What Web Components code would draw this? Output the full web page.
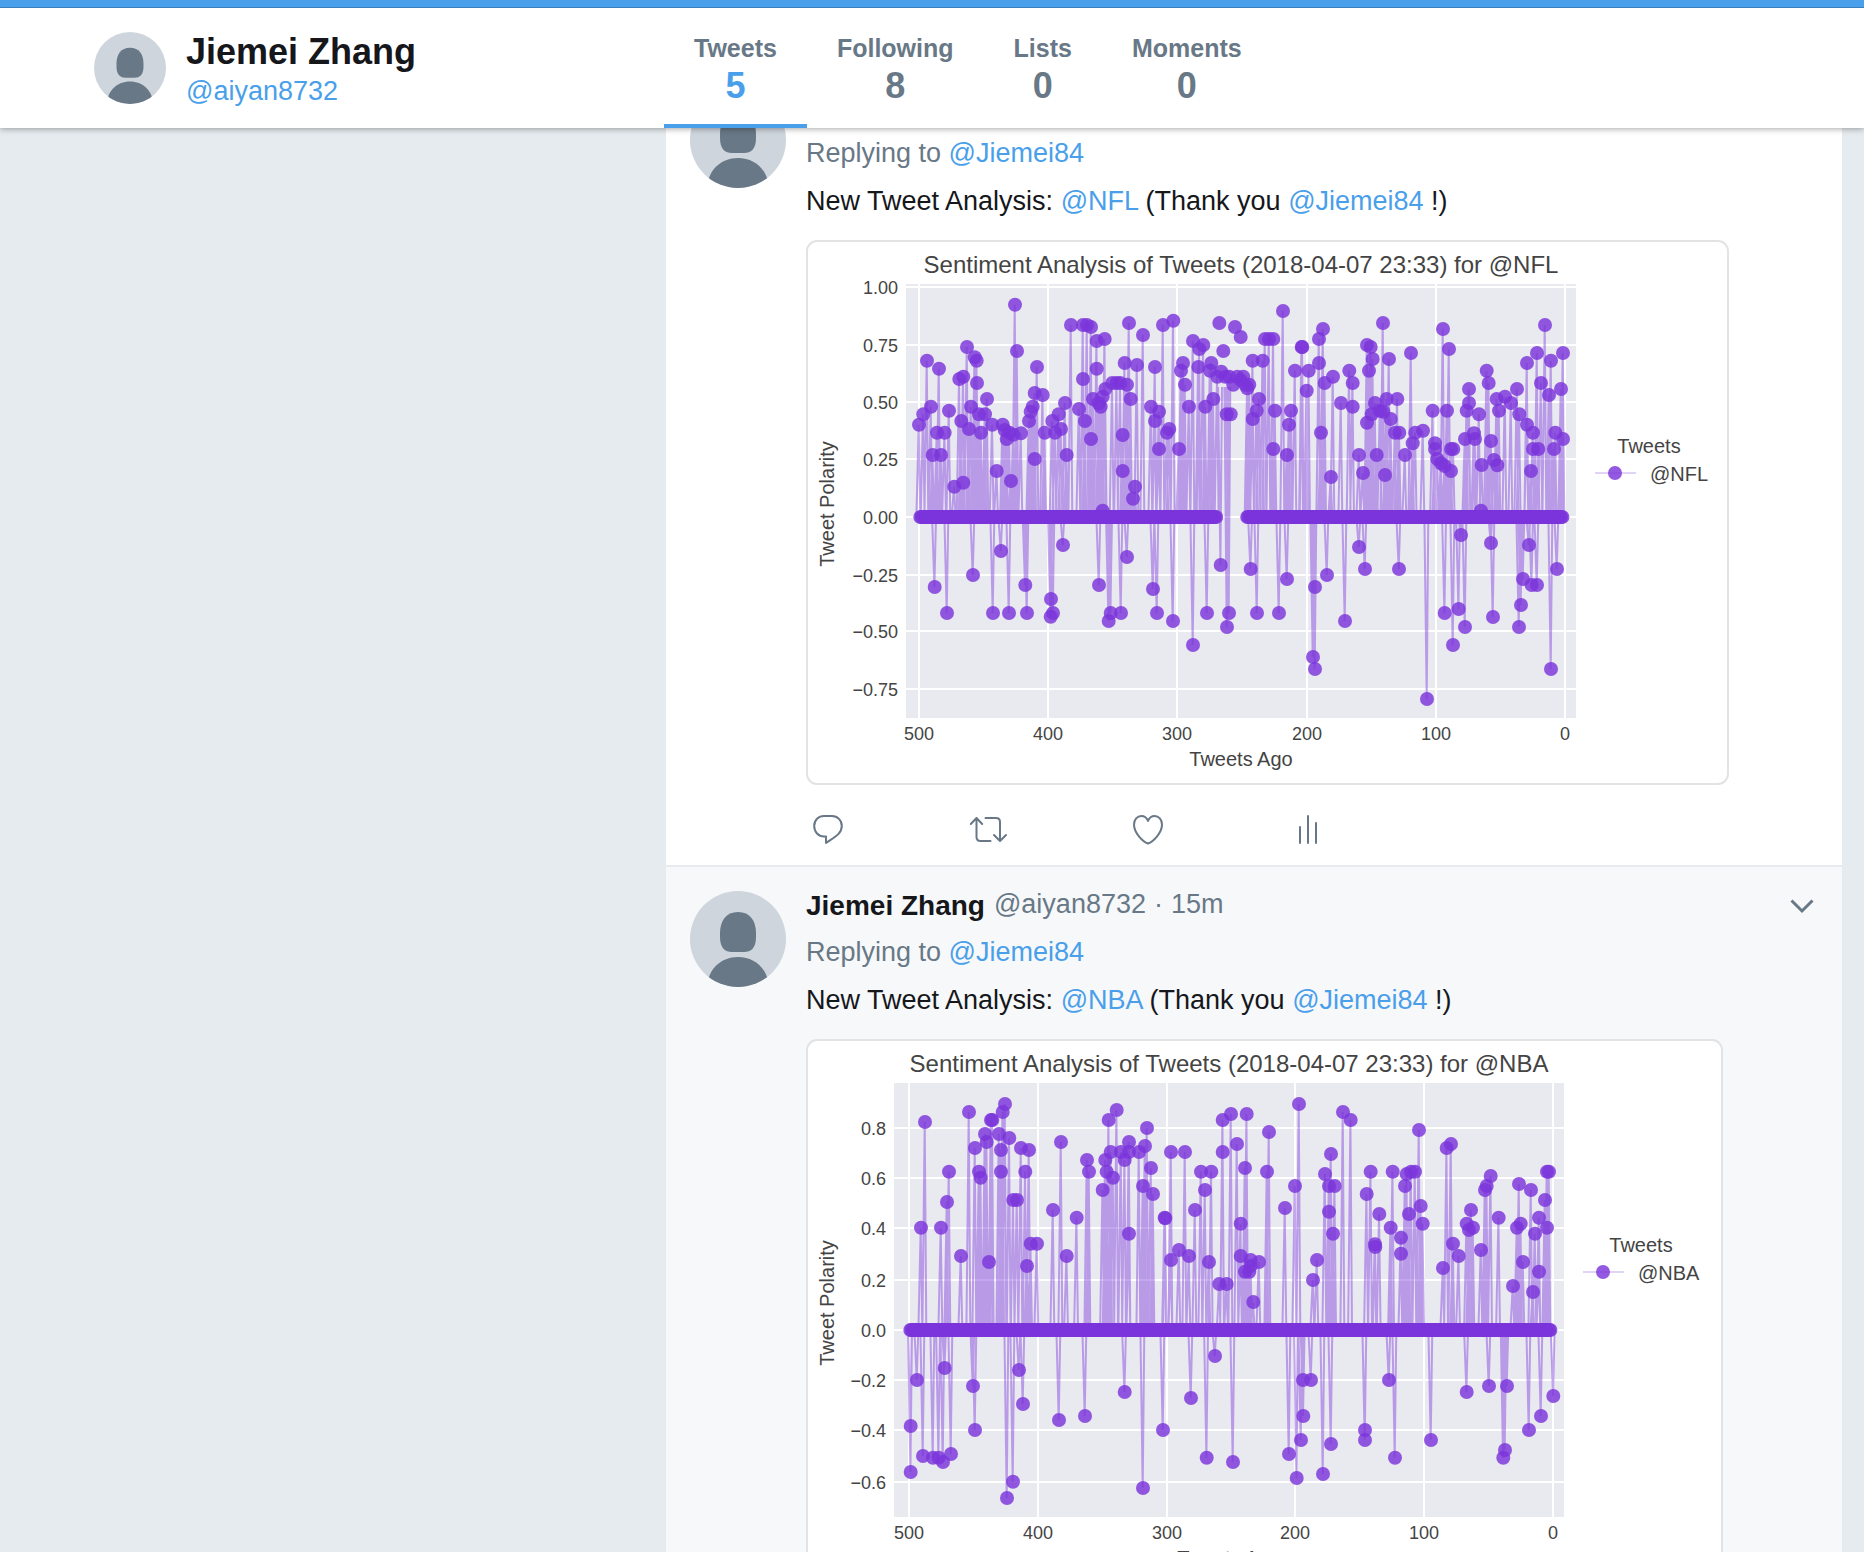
<!DOCTYPE html>
<html lang="en">
<head>
<meta charset="utf-8">
<title>Jiemei Zhang (@aiyan8732)</title>
<style>
  html, body { margin: 0; height: 100%; }
  body {
    --accent: #4a9fea; --muted: #687886; --ink: #15171b; --line: #e6ebef;
    --rail: 664px;
    background: var(--line); color: var(--ink); overflow: hidden;
    font-family: "Liberation Sans", Arial, sans-serif; font-size: 27px; line-height: 40px;
  }
</style>
</head>
<body>
<profile-page>
  <profile-bar slot="bar" name="Jiemei Zhang" handle="@aiyan8732">
    <profile-stat label="Tweets" value="5" active></profile-stat>
    <profile-stat label="Following" value="8"></profile-stat>
    <profile-stat label="Lists" value="0"></profile-stat>
    <profile-stat label="Moments" value="0"></profile-stat>
  </profile-bar>

  <tweet-card scrolled reply-to="@Jiemei84" team="@NFL">
    <sentiment-chart slot="media" data-set="nfl"></sentiment-chart>
  </tweet-card>
  <tweet-card tinted author="Jiemei Zhang" handle="@aiyan8732" time="15m" reply-to="@Jiemei84" team="@NBA">
    <sentiment-chart slot="media" data-set="nba"></sentiment-chart>
  </tweet-card>
</profile-page>

<script>
const attr = (el, name) => el.getAttribute(name) || '';

class ProfilePage extends HTMLElement {
  constructor() {
    super();
    this.attachShadow({ mode: 'open' }).innerHTML = `
      <style>
        :host { display: flex; flex-direction: column; height: 100vh; }
        main { flex: 1; min-height: 0; overflow: hidden; padding: 0 22px 0 calc(var(--rail) + 2px); }
      </style>
      <slot name="bar"></slot>
      <main><slot></slot></main>`;
  }
}

class UserAvatar extends HTMLElement {
  constructor() {
    super();
    this.attachShadow({ mode: 'open' }).innerHTML = `
      <style>
        :host { display: block; flex: none; width: 96px; height: 96px; border-radius: 50%; overflow: hidden; }
        svg { display: block; width: 100%; height: 100%; }
      </style>
      <svg viewBox="0 0 96 96" aria-hidden="true">
        <rect width="96" height="96" fill="#ced5dc"/>
        <g fill="#687886">
          <path d="M48 21C60 21 66 30 66 42V46C66 57 61 61 54 61H42C35 61 30 57 30 46V42C30 30 36 21 48 21Z"/>
          <path d="M17 96C18 78 31 66 48 66S78 78 79 96Z"/>
        </g>
      </svg>`;
  }
}

class ProfileBar extends HTMLElement {
  connectedCallback() {
    this.attachShadow({ mode: 'open' }).innerHTML = `
      <style>
        :host { display: block; position: relative; z-index: 1; flex: none; background: #fff;
                box-shadow: 0 1px 6px rgba(0,0,0,.35); }
        .strip { box-sizing: border-box; height: 8px; background: var(--accent); border-bottom: 1px solid #3a7fbb; }
        header { display: flex; height: 120px; }
        .who { box-sizing: border-box; width: var(--rail); padding: 24px 0 0 94px; display: flex; gap: 20px; }
        user-avatar { width: 72px; height: 72px; }
        h1 { margin: 0; font-size: 36px; line-height: 40px; }
        .id a { display: block; line-height: 38px; color: var(--accent); text-decoration: none; }
        nav { display: flex; }
      </style>
      <div class="strip"></div>
      <header>
        <div class="who">
          <user-avatar></user-avatar>
          <div class="id"><h1>${attr(this, 'name')}</h1><a href="#profile">${attr(this, 'handle')}</a></div>
        </div>
        <nav aria-label="Profile"><slot></slot></nav>
      </header>`;
  }
}

class ProfileStat extends HTMLElement {
  connectedCallback() {
    this.attachShadow({ mode: 'open' }).innerHTML = `
      <style>
        :host { display: flex; }
        a { box-sizing: border-box; padding: 24px 30px 0; border-bottom: 4px solid transparent;
            color: var(--muted); text-align: center; text-decoration: none; font-weight: bold; }
        span { display: block; font-size: 25px; line-height: 32px; }
        strong { display: block; font-size: 36px; line-height: 44px; }
        :host([active]) a { border-color: var(--accent); }
        :host([active]) strong { color: var(--accent); }
      </style>
      <a href="#${attr(this, 'label').toLowerCase()}"><span>${attr(this, 'label')}</span><strong>${attr(this, 'value')}</strong></a>`;
  }
}

class TweetActions extends HTMLElement {
  constructor() {
    super();
    const icons = {
      Reply: 'M18 7H26C31.500 7 35.800 11.300 35.800 17C35.800 25 28 28.500 20 34V27.500H18C12.500 27.500 8.200 23 8.200 17S12.500 7 18 7Z',
      Retweet: 'M4.800 15L10.500 9L16.200 15M10.500 9V28Q10.500 32 14.500 32H24.500M19.500 9H30Q34 9 34 13V32M28 26L34 32L40 26',
      Like: 'M22 34.500C17 33 8 24 8 15.500C8 10.500 11.300 7 15.300 7C18.700 7 21 9.300 22 12C23 9.300 25.300 7 28.700 7C32.700 7 36 10.500 36 15.500C36 24 27 33 22 34.500Z',
      Activity: 'M14 18V34M22 7V34M30 14V34'
    };
    this.attachShadow({ mode: 'open' }).innerHTML = `
      <style>
        :host { display: flex; gap: 116px; }
        button { padding: 0; border: 0; background: none; width: 44px; height: 40px; }
        svg { display: block; fill: none; stroke: var(--muted); stroke-width: 2; stroke-linecap: round; stroke-linejoin: round; }
      </style>
      ${Object.entries(icons).map(([name, d]) =>
        `<button type="button" aria-label="${name}"><svg width="44" height="40" viewBox="0 0 44 40"><path d="${d}"/></svg></button>`).join('')}`;
  }
}

class TweetCard extends HTMLElement {
  connectedCallback() {
    const heading = this.hasAttribute('scrolled') ? '' : `
      <b>${attr(this, 'author')}</b><span class="muted">${attr(this, 'handle')}</span><span class="muted dot">·</span><span class="muted">${attr(this, 'time')}</span>
      <button type="button" aria-label="More"><svg width="32" height="40" viewBox="0 0 32 40"><path d="M5.500 16.500L16 27L26.500 16.500"/></svg></button>`;
    const reply = attr(this, 'reply-to');
    this.attachShadow({ mode: 'open' }).innerHTML = `
      <style>
        :host { display: flex; gap: 20px; padding: 17px 24px 16px; background: #fff; border-bottom: 2px solid var(--line); }
        :host([scrolled]) { margin-top: -60px; }
        :host([tinted]) { background: #f7f8fa; }
        user-avatar { margin-top: 7px; }
        article { flex: 1; min-width: 0; }
        .head { display: flex; height: 40px; margin-bottom: 8px; }
        .head b { font-size: 28px; line-height: 44px; margin-right: 9px; }
        .dot { margin: 0 8px; }
        .head button { margin-left: auto; padding: 0; border: 0; background: none; }
        .head svg { display: block; fill: none; stroke: var(--muted); stroke-width: 3; }
        .muted { color: var(--muted); }
        p { margin: 0 0 8px; }
        a { color: var(--accent); text-decoration: none; }
        .media { margin: 19px 0 24px; }
      </style>
      <user-avatar></user-avatar>
      <article>
        <div class="head">${heading}</div>
        <p class="muted">Replying to <a href="#user">${reply}</a></p>
        <p>New Tweet Analysis: <a href="#team">${attr(this, 'team')}</a> (Thank you <a href="#user">${reply}</a> !)</p>
        <div class="media"><slot name="media"></slot></div>
        <tweet-actions></tweet-actions>
      </article>`;
  }
}

/* Samples are plotted in thirds of a pixel: each block has an origin and a list of x,y pairs. */
const charts = {
  nfl: {
    team: '@NFL', width: 919, left: 98, zero: 275, x500: 111, x0: 757, title: 433, legend: 787, legendTitle: 841,
    ticks: [['1.00', 45], ['0.75', 103], ['0.50', 160], ['0.25', 217], ['0.00', 275], ['−0.25', 333], ['−0.50', 389], ['−0.75', 447]],
    origin: [-24, -36], gap: [1252, 1338],
    blocks: [
      [0, 0, '357,584 370,553 381,392 393,530 398,675 411,608 417,416 423,675 434,608 447,542 463,770 478,447 484,573 490,440 490,758 501,351 507,597 513,530 524,382 530,392 531,459 543,608 537,553 555,553 561,507 577,584 590,723 608,584 614,600 620,627 628,608 633,753 640,614 645,224 651,363 663,610 687,573 692,545 698,530 704,489 704,687 711,411 728,495 734,608 757,573 765,608 776,553 783,597 795,519 800,675 813,285 837,537 849,447 849,285 855,573 861,285 873,291 873,627 879,507 890,333 890,416 896,520 902,530 908,500 908,842 914,327 916,477 937,459 950,459 961,459 968,615 968,723 974,399 981,464 987,279 992,507 999,806 1005,770 1011,405 1029,315 1053,530 1065,411 1065,573 1077,545 1077,657 1089,285 1101,608 1108,597 1120,272 1137,657 1143,422 1149,399 1155,464 1167,530 1179,333'],
      [1170, 0, '28,357 40,345 25,411 46,530 64,399 60,422 70,507 82,440 88,279 94,425 100,363 106,440 110,553 122,553 118,440 130,464 135,291 142,440 152,321 152,450 160,440 166,464 172,475 178,464 188,392 188,567 200,542 207,507 218,392 225,327 237,327 250,327 250,657 255,542 279,243 291,675 297,584 303,542 315,422 335,351 337,351 350,482 356,422 387,399 387,327 393,608 399,297 404,459 423,741 429,440 453,519 478,422 488,459 488,530 507,675 519,729 531,345 531,578 542,351 537,422 548,387 545,553 555,519 560,675 570,542 579,279 580,545 585,735 590,507 597,387 602,567 615,608 622,507 628,608 645,675 663,369 668,640 676,608 699,602 728,542 735,640 735,657 742,687 753,700 759,297 764,708 771,542 777,357 783,657 783,723 790,657 825,627 830,542 837,477 837,519 852,610 855,627 867,553 875,705 890,422 873,842 896,459 903,633 912,690 922,706 920,507 927,542 945,500 963,519 981,477 988,553 1011,584 1011,399 1023,723 1029,608 1029,657 1041,369 1045,657 1053,459 1065,285 1077,495 1083,392 1092,657 1096,608 1113,477 1119,369 1119,627'],
      [0, 810, '404,261 441,339 519,225 579,339 603,153 627,339 676,255 681,339 753,297 752,350 759,339 789,135 897,255 926,363 932,339 963,339 981,171 1059,267 1071,339 1119,363 1179,435'],
      [1170, 810, '51,339 92,195 117,339 111,381 182,207 201,339 267,339 291,237 369,471 375,507 375,261 411,225 465,363 507,141 525,207 627,207 711,597 764,339 789,435 806,327 813,105 825,381 903,129 909,351 987,381 993,315 999,237 1017,135 1025,255 1041,255 1083,507 1101,207']
    ]
  },
  nba: {
    team: '@NBA', width: 913, left: 86, zero: 289, x500: 101, x0: 745, title: 421, legend: 775, legendTitle: 833,
    ticks: [['0.8', 87], ['0.6', 137], ['0.4', 187], ['0.2', 239], ['0.0', 289], ['−0.2', 339], ['−0.4', 389], ['−0.6', 441]],
    origin: [-24, 0], gap: [0, 0],
    blocks: [
      [0, 0, '363,560 375,243 423,560 441,483 447,392 483,645 507,213 525,321 537,392 542,410 555,279 560,303 567,663 573,237 577,237 597,279 603,327 603,392 608,213 615,189 628,291 640,477 651,477 663,321 676,392 681,675 687,327 692,608 711,608 759,507 783,303 800,645 830,530 861,357 867,392 908,447 916,357 920,392 926,237 932,333 939,410 950,207 963,333 974,357 987,303 987,333 987,578 1017,333 1029,435 1035,315 1041,261 1053,381 1059,459 1094,530 1096,532 1113,333 1113,657 1137,627 1155,333 1167,645 1185,507'],
      [1170, 0, '33,392 45,447 57,663 64,392 88,729 98,237 98,333 110,729 123,219 141,309 152,548 152,645 165,381 170,219 165,692 182,657 182,675 178,692 190,783 207,663 231,392 237,273 285,501 315,435 327,189 369,717 381,657 405,399 417,435 417,512 423,339 429,578 434,435 459,213 482,237 530,459 542,392 555,610 556,618 568,519 602,560 608,392 633,590 633,638 645,435 650,399 657,519 663,392 675,392 687,267 692,495 698,548 759,681 770,321 783,309 789,608 806,645 830,548 837,567 843,507 849,560 873,627 885,447 890,435 902,405 926,530 969,735 981,560 987,429 992,548 999,663 1023,447 1029,753 1035,578 1047,530 1047,692 1065,477 1071,560 1071,392 1077,392'],
      [0, 780, '332,375 332,513 351,237 369,465 399,470 416,470 429,483 434,201 453,459 519,255 525,387 621,591 639,542 657,207 669,309 777,357 855,345 974,273 1029,561 1089,387 1173,291'],
      [1170, 780, '50,470 75,165 129,483 297,459 320,531 333,417 340,345 339,237 363,237 399,519 423,429 525,387 525,417 597,237 615,470 723,417 830,273 897,255 951,255 945,447 940,470 1017,387 1053,345 1090,285']
    ]
  }
};

class SentimentChart extends HTMLElement {
  connectedCallback() {
    const c = charts[this.dataset.set];
    const step = (c.x0 - c.x500) / 500;
    const f = n => n.toFixed(1);
    const [g0, g1] = c.gap.map(v => (v + c.origin[0]) / 3);
    const inGap = x => x > g0 && x < g1;
    const dots = [];
    let stems = '';
    for (const [dx, dy, list] of c.blocks) {
      for (const pair of list.split(' ')) {
        const [px, py] = pair.split(',').map(Number);
        const x = (px + dx + c.origin[0]) / 3;
        const y = (py + dy + c.origin[1]) / 3;
        dots.push([x, y]);
        const base = inGap(x) ? 145 : c.zero;
        if (!inGap(x) || y > c.zero) stems += `M${f(x - 2 * step)} ${base}L${f(x - 0.3)} ${f(y)}L${f(x + step)} ${base}`;
      }
    }
    for (let i = 1; i < 499; i++) {
      const x = c.x500 + i * step;
      if (!inGap(x)) dots.push([x, c.zero]);
    }
    const right = c.left + 670;
    const xs = [500, 400, 300, 200, 100, 0].map(n => [n, Math.round(c.x0 - n * step)]);
    this.attachShadow({ mode: 'open' }).innerHTML = `
      <style>
        :host { display: block; box-sizing: border-box; max-width: ${c.width + 4}px; border: 2px solid #e1e3e5; border-radius: 11px; background: #fff; overflow: hidden; }
        svg { display: block; width: 100%; height: auto; }
        text { fill: #444; font-size: 20px; }
        .title { font-size: 24px; }
        .tick { font-size: 18px; }
        .grid { stroke: #fff; stroke-width: 2; }
        .line { fill: none; stroke: #8445dd; stroke-width: 2; stroke-linejoin: bevel; opacity: .48; }
        .key { stroke-width: 1; }
        .dots { fill: #7b35da; fill-opacity: .82; }
      </style>
      <svg viewBox="0 0 ${c.width} 541" role="img" aria-label="Sentiment chart for ${c.team}">
        <rect x="${c.left}" y="42" width="670" height="434" fill="#e9e9f0"/>
        <g class="grid">
          ${c.ticks.map(([, y]) => `<path d="M${c.left} ${y}H${right}"/>`).join('')}
          ${xs.map(([, x]) => `<path d="M${x} 42V476"/>`).join('')}
        </g>
        <path class="line" d="${stems}"/>
        <g class="dots">${dots.map(([x, y]) => `<circle cx="${f(x)}" cy="${f(y)}" r="7"/>`).join('')}</g>
        <text class="title" x="${c.title}" y="31" text-anchor="middle">Sentiment Analysis of Tweets (2018-04-07 23:33) for ${c.team}</text>
        ${c.ticks.map(([t, y]) => `<text class="tick" x="${c.left - 8}" y="${y + 7}" text-anchor="end">${t}</text>`).join('')}
        ${xs.map(([t, x]) => `<text class="tick" x="${x}" y="498" text-anchor="middle">${t}</text>`).join('')}
        <text x="${c.left + 335}" y="524" text-anchor="middle">Tweets Ago</text>
        <text transform="translate(26 262) rotate(-90)" text-anchor="middle">Tweet Polarity</text>
        <text x="${c.legendTitle}" y="211" text-anchor="middle">Tweets</text>
        <path class="line key" d="M${c.legend} 231H${c.legend + 41}"/>
        <circle class="dots" cx="${c.legend + 20}" cy="231" r="7"/>
        <text x="${c.legend + 55}" y="239">${c.team}</text>
      </svg>`;
  }
}

customElements.define('user-avatar', UserAvatar);
customElements.define('profile-stat', ProfileStat);
customElements.define('profile-bar', ProfileBar);
customElements.define('tweet-actions', TweetActions);
customElements.define('sentiment-chart', SentimentChart);
customElements.define('tweet-card', TweetCard);
customElements.define('profile-page', ProfilePage);
</script>
</body>
</html>
